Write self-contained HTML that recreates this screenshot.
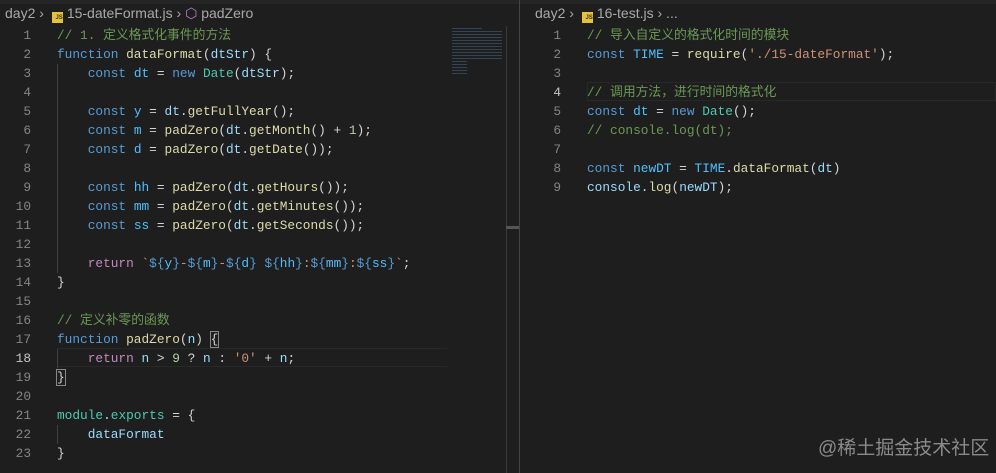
<!DOCTYPE html>
<html><head><meta charset="utf-8"><style>
body{margin:0;width:996px;height:473px;background:#1e1e1e;overflow:hidden;position:relative;font-family:"Liberation Mono","Noto Sans CJK SC",monospace;}
.bc{position:absolute;top:5px;font:14px "Liberation Sans","Noto Sans CJK SC",sans-serif;color:#a9a9a9;white-space:nowrap}
.js{display:inline-block;width:11px;height:11px;background:#e8c13b;color:#333;font-size:6px;font-weight:bold;line-height:13px;text-align:right;vertical-align:-1px;margin:0 4px}
.ln{position:absolute;width:30px;text-align:right;color:#858585;font-size:12.8px;line-height:19px}
.code{position:absolute;color:#d4d4d4;font-size:12.8px;line-height:19px;white-space:pre}
.k{color:#569cd6}.v{color:#9cdcfe}.f{color:#dcdcaa}.c{color:#4ec9b0}.cm{color:#6a9955}.s{color:#ce9178}.r{color:#c586c0}.n{color:#b5cea8}.t{color:#4fc1ff}
.g{position:absolute;width:1px;background:#404040}
</style></head><body>
<div style="position:absolute;left:0;top:0;width:996px;height:4px;background:#252526"></div>
<div class="bc" style="left:5px">day2 › <span class="js">JS</span>15-dateFormat.js › <span style="color:#b180d7">⬡</span> padZero</div>
<div class="bc" style="left:535px">day2 › <span class="js">JS</span>16-test.js › ...</div>
<div style="position:absolute;left:57px;top:348px;width:390px;height:19px;border-top:1px solid #282828;border-bottom:1px solid #282828;box-sizing:border-box"></div>
<div style="position:absolute;left:587px;top:82px;width:409px;height:19px;border:1px solid #282828;box-sizing:border-box"></div>
<div class="g" style="left:57px;top:64px;height:209px"></div>
<div class="g" style="left:57px;top:349px;height:19px"></div>
<div class="g" style="left:57px;top:425px;height:19px"></div>
<div class="ln" style="left:1px;top:26px">1<br>2<br>3<br>4<br>5<br>6<br>7<br>8<br>9<br>10<br>11<br>12<br>13<br>14<br>15<br>16<br>17<br><span style="color:#c6c6c6">18</span><br>19<br>20<br>21<br>22<br>23</div>
<div class="code" style="left:57px;top:26px"><span class="cm">// 1. 定义格式化事件的方法</span>
<span class="k">function</span> <span class="f">dataFormat</span>(<span class="v">dtStr</span>) {
    <span class="k">const</span> <span class="t">dt</span> = <span class="k">new</span> <span class="c">Date</span>(<span class="v">dtStr</span>);

    <span class="k">const</span> <span class="t">y</span> = <span class="v">dt</span>.<span class="f">getFullYear</span>();
    <span class="k">const</span> <span class="t">m</span> = <span class="f">padZero</span>(<span class="v">dt</span>.<span class="f">getMonth</span>() + <span class="n">1</span>);
    <span class="k">const</span> <span class="t">d</span> = <span class="f">padZero</span>(<span class="v">dt</span>.<span class="f">getDate</span>());

    <span class="k">const</span> <span class="t">hh</span> = <span class="f">padZero</span>(<span class="v">dt</span>.<span class="f">getHours</span>());
    <span class="k">const</span> <span class="t">mm</span> = <span class="f">padZero</span>(<span class="v">dt</span>.<span class="f">getMinutes</span>());
    <span class="k">const</span> <span class="t">ss</span> = <span class="f">padZero</span>(<span class="v">dt</span>.<span class="f">getSeconds</span>());

    <span class="r">return</span> <span class="s">`</span><span class="k">${</span><span class="t">y</span><span class="k">}</span><span class="s">-</span><span class="k">${</span><span class="t">m</span><span class="k">}</span><span class="s">-</span><span class="k">${</span><span class="t">d</span><span class="k">}</span> <span class="k">${</span><span class="t">hh</span><span class="k">}</span><span class="s">:</span><span class="k">${</span><span class="t">mm</span><span class="k">}</span><span class="s">:</span><span class="k">${</span><span class="t">ss</span><span class="k">}</span><span class="s">`</span>;
}

<span class="cm">// 定义补零的函数</span>
<span class="k">function</span> <span class="f">padZero</span>(<span class="v">n</span>) <span style="outline:1px solid #888">{</span>
    <span class="r">return</span> <span class="v">n</span> &gt; <span class="n">9</span> ? <span class="v">n</span> : <span class="s">'0'</span> + <span class="v">n</span>;
<span style="outline:1px solid #888">}</span>

<span class="c">module</span>.<span class="c">exports</span> = {
    <span class="v">dataFormat</span>
}</div>
<div style="position:absolute;left:452px;top:26px;width:50px;height:50px;opacity:.5;background:repeating-linear-gradient(#1e1e1e 0 2px,#4a6a8a 2px 3px);clip-path:polygon(0 0,60% 0,60% 10%,100% 10%,100% 70%,30% 70%,30% 100%,0 100%)"></div>
<div style="position:absolute;left:506px;top:26px;width:1px;height:447px;background:#3a3a3a"></div>
<div style="position:absolute;left:506px;top:226px;width:13px;height:3px;background:#555"></div>
<div style="position:absolute;left:519px;top:0;width:1px;height:473px;background:#444"></div>
<div class="ln" style="left:531px;top:26px">1<br>2<br>3<br><span style="color:#c6c6c6">4</span><br>5<br>6<br>7<br>8<br>9</div>
<div class="code" style="left:587px;top:26px"><span class="cm">// 导入自定义的格式化时间的模块</span>
<span class="k">const</span> <span class="t">TIME</span> = <span class="f">require</span>(<span class="s">'./15-dateFormat'</span>);

<span class="cm">// 调用方法，进行时间的格式化</span>
<span class="k">const</span> <span class="t">dt</span> = <span class="k">new</span> <span class="c">Date</span>();
<span class="cm">// console.log(dt);</span>

<span class="k">const</span> <span class="t">newDT</span> = <span class="t">TIME</span>.<span class="f">dataFormat</span>(<span class="v">dt</span>)
<span class="v">console</span>.<span class="f">log</span>(<span class="v">newDT</span>);</div>
<div style="position:absolute;left:818px;top:433px;font:19px 'Liberation Sans','Noto Sans CJK SC',sans-serif;color:#8a8a8a;white-space:nowrap">@稀土掘金技术社区</div>
</body></html>
